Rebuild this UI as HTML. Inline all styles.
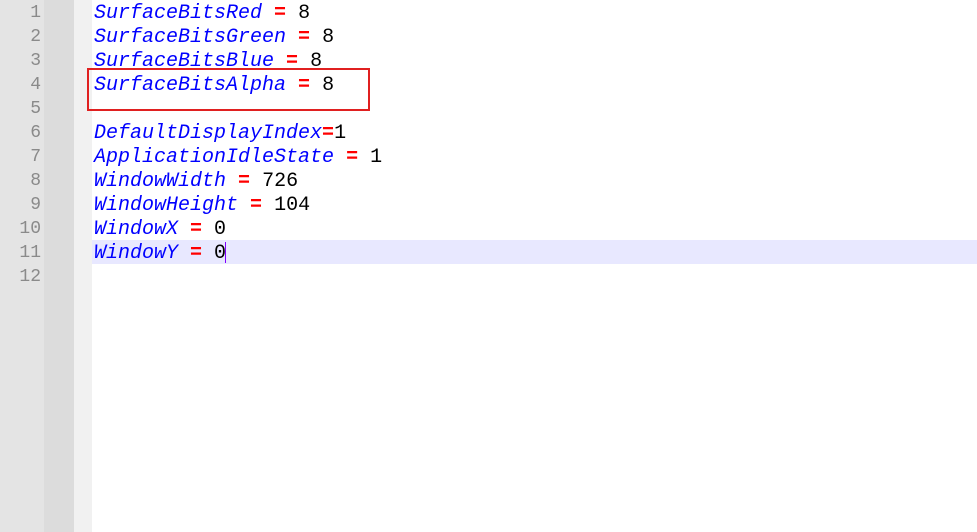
<!DOCTYPE html>
<html><head><style>
body{margin:0;width:977px;height:532px;overflow:hidden;background:#fff;position:relative;font-family:"Liberation Mono",monospace;}
.g1{position:absolute;left:0;top:0;width:44px;height:532px;background:#e4e4e4;}
.g2{position:absolute;left:44px;top:0;width:30px;height:532px;background:#dcdcdc;}
.g3{position:absolute;left:74px;top:0;width:18px;height:532px;background:#f1f1f1;}
.cur{position:absolute;left:92px;top:240px;width:885px;height:24px;background:#e8e8ff;}
.ln{position:absolute;left:0;width:41px;text-align:right;color:#8a8a8a;font-size:18px;line-height:24px;margin-top:1px;}
.tx{position:absolute;left:94px;font-size:20px;line-height:24px;white-space:pre;color:#000;margin-top:2px;}
.k{color:#0000ff;font-style:italic;}
.o{color:#ff0000;font-weight:bold;}
.box{position:absolute;left:87px;top:68px;width:279px;height:39px;border:2px solid #e02020;}
.caret{position:absolute;left:225px;top:242px;width:1px;height:21px;background:#8000ff;}
</style></head><body>
<div class="g1"></div><div class="g2"></div><div class="g3"></div>
<div class="cur"></div>
<div class="ln" style="top:0">1</div><div class="ln" style="top:24px">2</div><div class="ln" style="top:48px">3</div><div class="ln" style="top:72px">4</div><div class="ln" style="top:96px">5</div><div class="ln" style="top:120px">6</div><div class="ln" style="top:144px">7</div><div class="ln" style="top:168px">8</div><div class="ln" style="top:192px">9</div><div class="ln" style="top:216px">10</div><div class="ln" style="top:240px">11</div><div class="ln" style="top:264px">12</div>
<div class="tx" style="top:0"><span class="k">SurfaceBitsRed</span> <span class="o">=</span> 8</div>
<div class="tx" style="top:24px"><span class="k">SurfaceBitsGreen</span> <span class="o">=</span> 8</div>
<div class="tx" style="top:48px"><span class="k">SurfaceBitsBlue</span> <span class="o">=</span> 8</div>
<div class="tx" style="top:72px"><span class="k">SurfaceBitsAlpha</span> <span class="o">=</span> 8</div>
<div class="tx" style="top:120px"><span class="k">DefaultDisplayIndex</span><span class="o">=</span>1</div>
<div class="tx" style="top:144px"><span class="k">ApplicationIdleState</span> <span class="o">=</span> 1</div>
<div class="tx" style="top:168px"><span class="k">WindowWidth</span> <span class="o">=</span> 726</div>
<div class="tx" style="top:192px"><span class="k">WindowHeight</span> <span class="o">=</span> 104</div>
<div class="tx" style="top:216px"><span class="k">WindowX</span> <span class="o">=</span> 0</div>
<div class="tx" style="top:240px"><span class="k">WindowY</span> <span class="o">=</span> 0</div>
<div class="caret"></div>
<div class="box"></div>
</body></html>
